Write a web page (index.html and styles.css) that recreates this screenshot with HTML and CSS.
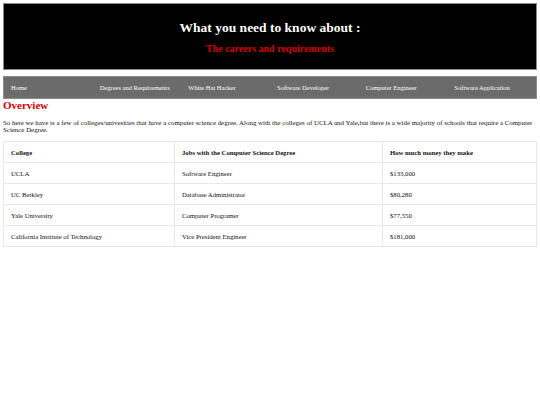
FILE: index.html
```html
<!DOCTYPE html>
<html>
<head>
<meta charset="utf-8">
<link rel="stylesheet" href="styles.css">
</head>
<body>
<header class="banner">
  <h1 class="title">What you need to know about :</h1>
  <h2 class="subtitle">The careers and requirements</h2>
</header>
<nav class="nav">
  <a class="nav-item">Home</a>
  <a class="nav-item">Degrees and Requirements</a>
  <a class="nav-item">White Hat Hacker</a>
  <a class="nav-item">Software Developer</a>
  <a class="nav-item">Computer Engineer</a>
  <a class="nav-item">Software Application</a>
</nav>
<h3 class="section-title">Overview</h3>
<p class="intro">So here we have is a few of colleges/univesities that have a computer science degree. Along with the colleges of UCLA and Yale,but there is a wide majority of schools that require a Computer Science Degree.</p>
<table class="data">
  <thead>
    <tr><th class="c1">College</th><th class="c2">Jobs with the Computer Science Degree</th><th>How much money they make</th></tr>
  </thead>
  <tbody>
    <tr><td>UCLA</td><td>Software Engineer</td><td>$133,000</td></tr>
    <tr><td>UC Berkley</td><td>Database Administrator</td><td>$80,280</td></tr>
    <tr><td>Yale University</td><td>Computer Programer</td><td>$77,550</td></tr>
    <tr><td>California Institute of Technology</td><td>Vice President Engineer</td><td>$181,000</td></tr>
  </tbody>
</table>
</body>
</html>
```
FILE: styles.css
```css
html, body { margin: 0; padding: 0; background: #fff; }
body {
  padding: 3px;
  font-family: "Liberation Serif", "Times New Roman", serif;
  color: #111;
}
.banner {
  background: #000;
  border: 1px solid #8a8a8a;
  height: 65px;
  display: flex;
  flex-direction: column;
  align-items: center;
}
.title {
  margin: 16px 0 0;
  color: #fff;
  font-size: 13.5px;
  line-height: 16px;
  font-weight: bold;
}
.subtitle {
  margin: 7px 0 0;
  color: #d40000;
  font-size: 10px;
  line-height: 12px;
  font-weight: bold;
}
.nav {
  margin-top: 6px;
  display: flex;
  background: #6b6b6b;
  border: 1px solid #8c8c8c;
  height: 21px;
  align-items: center;
}
.nav-item {
  flex: 1;
  padding-left: 7px;
  color: #fff;
  font-size: 6.5px;
}
.section-title {
  margin: 0;
  color: #d40000;
  font-size: 11px;
  line-height: 13px;
  font-weight: bold;
}
.intro {
  margin: 7px 0 0;
  font-size: 6.9px;
  line-height: 7px;
}
.data {
  margin-top: 8px;
  width: 100%;
  border-collapse: collapse;
  font-size: 6.7px;
}
.data th, .data td {
  border: 1px solid #e8e8e8;
  height: 20px;
  padding: 0 7px;
  text-align: left;
  vertical-align: middle;
}
.data th { font-weight: bold; }
.data .c1 { width: 156px; }
.data .c2 { width: 193px; }
```
